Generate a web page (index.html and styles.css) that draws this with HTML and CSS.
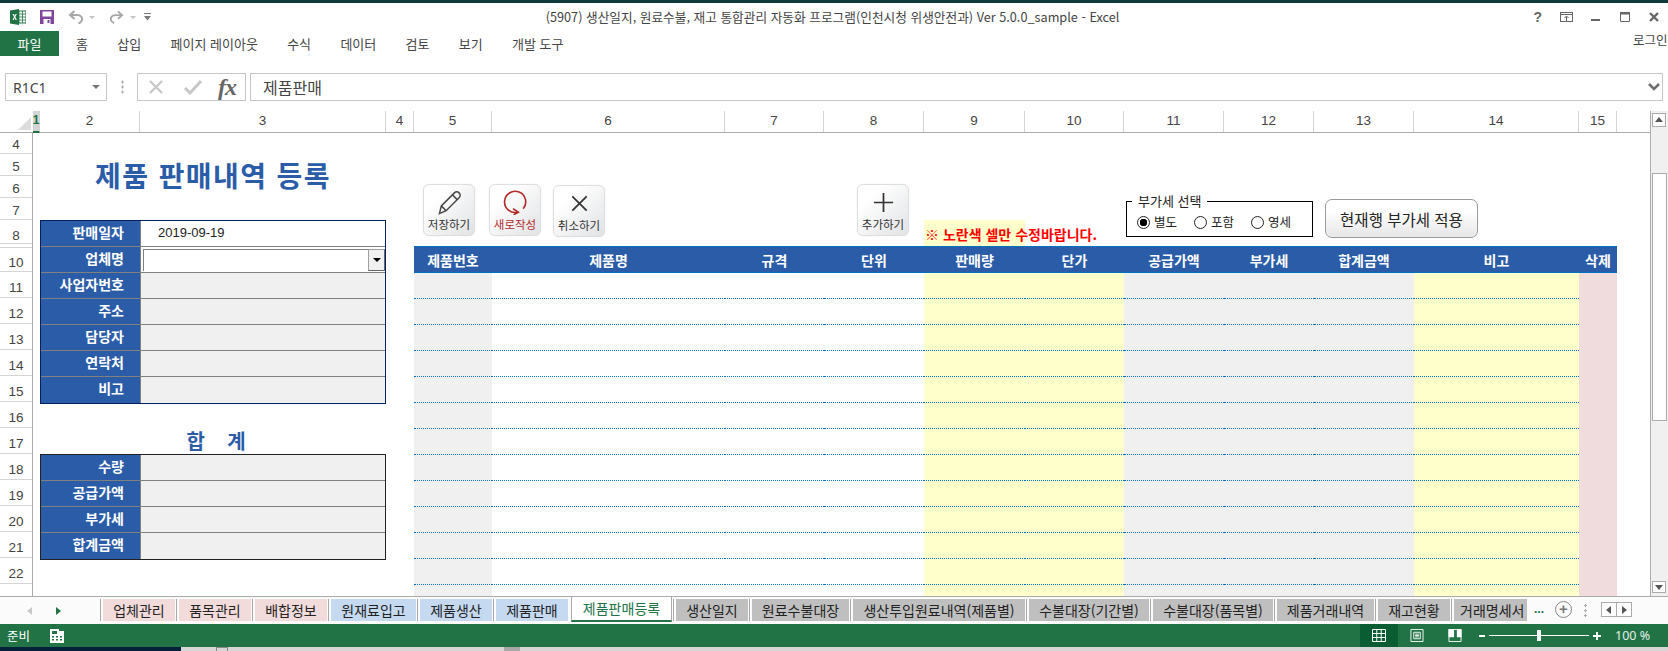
FILE: index.html
```html
<!DOCTYPE html>
<html lang="ko">
<head>
<meta charset="utf-8">
<title>제품 판매내역 등록</title>
<link rel="stylesheet" href="styles.css">
</head>
<body>
<div class="app">
  <header class="titlebar">
    <div class="qat">
      <svg class="q-xl" viewBox="0 0 16 16"><rect x="6" y="2" width="10" height="12" fill="#fff" stroke="#217346"/><path d="M9 2v12M12.500 2v12M6 5h10M6 8h10M6 11h10" stroke="#217346" stroke-width=".8"/><path d="M0 1.500 9 0v16L0 14.500z" fill="#217346"/><path d="m2.500 5 1.500 3-1.500 3h1.300l.9-2 .9 2h1.300l-1.600-3 1.500-3H5.500l-.8 1.900L3.900 5z" fill="#fff"/></svg>
      <svg class="q-save" viewBox="0 0 14 14"><path d="M0 0h14v14H0z" fill="#80469c"/><path d="M2.500 1.500h9v5h-9z" fill="#fff"/><path d="M3.500 9h7v5h-7z" fill="#fff"/><path d="M7.500 10h2v3h-2z" fill="#80469c"/></svg>
      <svg class="q-undo" viewBox="0 0 16 14"><path d="M6.500 1 2 5l4.500 4" fill="none" stroke="#a6a6a6" stroke-width="2"/><path d="M2.500 5H9c4 0 5.500 2.500 5 5-.4 2-2 3-3.500 3.500" fill="none" stroke="#a6a6a6" stroke-width="2"/></svg>
      <span class="q-caret"></span>
      <svg class="q-redo" viewBox="0 0 16 14"><path d="M9.500 1 14 5 9.500 9" fill="none" stroke="#a6a6a6" stroke-width="2"/><path d="M13.500 5H7C3 5 1.500 7.500 2 10c.4 2 2 3 3.500 3.500" fill="none" stroke="#a6a6a6" stroke-width="2"/></svg>
      <span class="q-caret q-caret2"></span>
      <svg class="q-cust" viewBox="0 0 7 8"><path d="M0 0h7v1H0zM0 3h7L3.500 7.500z" fill="#7a7a7a"/></svg>
    </div>
    <div class="doc-title">(5907) 생산일지, 원료수불, 재고 통합관리 자동화 프로그램(인천시청 위생안전과) Ver 5.0.0_sample - Excel</div>
    <div class="winctl">
      <span class="help">?</span>
      <svg class="w-disp" viewBox="0 0 13 10"><rect x=".5" y=".5" width="12" height="9" fill="none" stroke="#666"/><path d="M0 2.500h13M6.500 9V4.500M4.500 6l2-2 2 2" fill="none" stroke="#666"/></svg>
      <svg class="w-min" viewBox="0 0 9 10"><path d="M0 7h9v2H0z" fill="#666"/></svg>
      <svg class="w-max" viewBox="0 0 10 10"><path d="M.5.500h9v9h-9z" fill="none" stroke="#666"/><path d="M0 0h10v2.500H0z" fill="#666"/></svg>
      <svg class="w-close" viewBox="0 0 10 10"><path d="m1 1 8 8M9 1 1 9" stroke="#666" stroke-width="2.400"/></svg>
    </div>
  </header>

  <nav class="ribbon">
    <span class="file">파일</span>
    <ul class="rtabs">
      <li>홈</li><li>삽입</li><li>페이지 레이아웃</li><li>수식</li><li>데이터</li><li>검토</li><li>보기</li><li>개발 도구</li>
    </ul>
    <span class="login">로그인</span>
  </nav>

  <div class="fbar">
    <div class="namebox"><span>R1C1</span><i class="caret"></i></div>
    <div class="vdots"></div>
    <div class="fxbox">
      <svg class="fx-x" viewBox="0 0 16 16"><path d="m2 2 12 12M14 2 2 14" stroke="#c8c8c8" stroke-width="2.400"/></svg>
      <svg class="fx-c" viewBox="0 0 20 16"><path d="m2 9 5 5L18 2" fill="none" stroke="#c8c8c8" stroke-width="3"/></svg>
      <span class="fx">fx</span>
    </div>
    <div class="finput"><span>제품판매</span><svg viewBox="0 0 12 8"><path d="m1 1 5 5 5-5" fill="none" stroke="#6e6e6e" stroke-width="2.500"/></svg></div>
  </div>

  <main class="main">
    <div class="sheet">
      <div class="colhead">
        <div class="corner"><i></i></div>
        <span class="ch c1 sel">1</span><span class="ch c2">2</span><span class="ch c3">3</span><span class="ch c4">4</span><span class="ch c5">5</span><span class="ch c6">6</span><span class="ch c7">7</span><span class="ch c8">8</span><span class="ch c9">9</span><span class="ch c10">10</span><span class="ch c11">11</span><span class="ch c12">12</span><span class="ch c13">13</span><span class="ch c14">14</span><span class="ch c15">15</span>
      </div>
      <div class="body">
        <div class="rowhead">
          <span class="rh r21">4</span><span class="rh r22">5</span><span class="rh r22">6</span><span class="rh r22">7</span><span class="rh r8">8</span><span class="rh r4"></span><span class="rh r24">10</span><span class="rh">11</span><span class="rh">12</span><span class="rh">13</span><span class="rh">14</span><span class="rh">15</span><span class="rh">16</span><span class="rh">17</span><span class="rh">18</span><span class="rh">19</span><span class="rh">20</span><span class="rh">21</span><span class="rh">22</span>
        </div>
        <div class="canvas">
          <section class="left">
            <h1 class="bigtitle">제품 판매내역 등록</h1>
            <div class="form navy">
              <div class="lb">판매일자</div><div class="val white date">2019-09-19</div>
              <div class="lb">업체명</div><div class="val white combo"><span class="cbfield"></span><span class="cbbtn"></span></div>
              <div class="lb">사업자번호</div><div class="val"></div>
              <div class="lb">주소</div><div class="val"></div>
              <div class="lb">담당자</div><div class="val"></div>
              <div class="lb">연락처</div><div class="val"></div>
              <div class="lb">비고</div><div class="val"></div>
            </div>
            <h2 class="sumtitle">합&nbsp;&nbsp;&nbsp;&nbsp;계</h2>
            <div class="form dark">
              <div class="lb">수량</div><div class="val"></div>
              <div class="lb">공급가액</div><div class="val"></div>
              <div class="lb">부가세</div><div class="val"></div>
              <div class="lb">합계금액</div><div class="val"></div>
            </div>
          </section>
          <section class="right">
            <div class="righttop"><p class="note"><span>※ 노란색 셀만 수정바랍니다.</span></p></div>
            <table class="grid">
              <colgroup><col class="c5"><col class="c6"><col class="c7"><col class="c8"><col class="c9"><col class="c10"><col class="c11"><col class="c12"><col class="c13"><col class="c14"><col class="c15"></colgroup>
              <thead><tr><th>제품번호</th><th>제품명</th><th>규격</th><th>단위</th><th>판매량</th><th>단가</th><th>공급가액</th><th>부가세</th><th>합계금액</th><th>비고</th><th>삭제</th></tr></thead>
              <tbody>
                <tr><td class="g"></td><td></td><td></td><td></td><td class="y"></td><td class="y"></td><td class="g"></td><td class="g"></td><td class="g"></td><td class="y"></td><td class="p"></td></tr>
                <tr><td class="g"></td><td></td><td></td><td></td><td class="y"></td><td class="y"></td><td class="g"></td><td class="g"></td><td class="g"></td><td class="y"></td><td class="p"></td></tr>
                <tr><td class="g"></td><td></td><td></td><td></td><td class="y"></td><td class="y"></td><td class="g"></td><td class="g"></td><td class="g"></td><td class="y"></td><td class="p"></td></tr>
                <tr><td class="g"></td><td></td><td></td><td></td><td class="y"></td><td class="y"></td><td class="g"></td><td class="g"></td><td class="g"></td><td class="y"></td><td class="p"></td></tr>
                <tr><td class="g"></td><td></td><td></td><td></td><td class="y"></td><td class="y"></td><td class="g"></td><td class="g"></td><td class="g"></td><td class="y"></td><td class="p"></td></tr>
                <tr><td class="g"></td><td></td><td></td><td></td><td class="y"></td><td class="y"></td><td class="g"></td><td class="g"></td><td class="g"></td><td class="y"></td><td class="p"></td></tr>
                <tr><td class="g"></td><td></td><td></td><td></td><td class="y"></td><td class="y"></td><td class="g"></td><td class="g"></td><td class="g"></td><td class="y"></td><td class="p"></td></tr>
                <tr><td class="g"></td><td></td><td></td><td></td><td class="y"></td><td class="y"></td><td class="g"></td><td class="g"></td><td class="g"></td><td class="y"></td><td class="p"></td></tr>
                <tr><td class="g"></td><td></td><td></td><td></td><td class="y"></td><td class="y"></td><td class="g"></td><td class="g"></td><td class="g"></td><td class="y"></td><td class="p"></td></tr>
                <tr><td class="g"></td><td></td><td></td><td></td><td class="y"></td><td class="y"></td><td class="g"></td><td class="g"></td><td class="g"></td><td class="y"></td><td class="p"></td></tr>
                <tr><td class="g"></td><td></td><td></td><td></td><td class="y"></td><td class="y"></td><td class="g"></td><td class="g"></td><td class="g"></td><td class="y"></td><td class="p"></td></tr>
                <tr><td class="g"></td><td></td><td></td><td></td><td class="y"></td><td class="y"></td><td class="g"></td><td class="g"></td><td class="g"></td><td class="y"></td><td class="p"></td></tr>
                <tr class="tail"><td class="g"></td><td></td><td></td><td></td><td class="y"></td><td class="y"></td><td class="g"></td><td class="g"></td><td class="g"></td><td class="y"></td><td class="p"></td></tr>
              </tbody>
            </table>
          </section>

          <button class="sbtn b-save"><svg viewBox="0 0 26 26"><path d="M2.500 24.500 4.500 16.500 18 3c1.500-1.500 3.500-1.500 5 0s1.500 3.500 0 5L9.500 21.500zM4.500 16.500l5 5M16 5l5 5" fill="none" stroke="#444" stroke-width="1.500"/></svg><span>저장하기</span></button>
          <button class="sbtn b-new"><svg viewBox="0 0 26 26"><path d="M21 19.500A11 11 0 1 0 15.500 23" fill="none" stroke="#b22b2b" stroke-width="1.700"/><path d="m10.500 19.500 5.500 3.500-5 2.800" fill="none" stroke="#b22b2b" stroke-width="1.700"/></svg><span>새로작성</span></button>
          <button class="sbtn b-cancel"><svg viewBox="0 0 26 26"><path d="m5.500 5.500 15 15M20.500 5.500l-15 15" stroke="#333" stroke-width="1.800"/></svg><span>취소하기</span></button>
          <button class="sbtn b-add"><svg viewBox="0 0 26 26"><path d="M13 3v20M3 13h20" stroke="#333" stroke-width="1.800"/></svg><span>추가하기</span></button>

          <div class="vatbox">
            <span class="vatlegend">부가세 선택</span>
            <div class="radios">
              <span class="radio on"><i></i>별도</span>
              <span class="radio"><i></i>포함</span>
              <span class="radio"><i></i>영세</span>
            </div>
          </div>
          <button class="applybtn">현재행 부가세 적용</button>
        </div>
      </div>
    </div>
    <aside class="vscroll">
      <span class="sb-btn up"></span>
      <span class="sb-thumb"></span>
      <span class="sb-btn down"></span>
    </aside>
  </main>

  <div class="tabbar">
    <div class="tabnav"><i class="prev"></i><i class="next"></i></div>
    <span class="tab pink t72">업체관리</span>
    <span class="tab pink t72">품목관리</span>
    <span class="tab pink t72">배합정보</span>
    <span class="tab blue t85">원재료입고</span>
    <span class="tab blue t72">제품생산</span>
    <span class="tab blue t72">제품판매</span>
    <span class="tab active">제품판매등록</span>
    <span class="tab gray t72">생산일지</span>
    <span class="tab gray t97">원료수불대장</span>
    <span class="tab gray t172">생산투입원료내역(제품별)</span>
    <span class="tab gray t119">수불대장(기간별)</span>
    <span class="tab gray t120">수불대장(품목별)</span>
    <span class="tab gray t97">제품거래내역</span>
    <span class="tab gray t72">재고현황</span>
    <span class="tab gray t73 cut">거래명세서</span>
    <span class="more">...</span>
    <span class="addsheet">+</span>
    <span class="tdots"></span>
    <span class="hnav"><i class="hl"></i><i class="hr"></i></span>
  </div>

  <footer class="status">
    <span class="ready">준비</span>
    <svg class="macro" viewBox="0 0 14 14"><path d="M0 0h9v2h5v12H0z" fill="#fff"/><path d="M2 2h5v3H2zM2 7h2v1.500H2zM6 7h2v1.500H6zM10 7h2v1.500h-2zM2 10h2v1.500H2zM6 10h2v1.500H6zM10 10h2v1.500h-2z" fill="#217346"/></svg>
    <div class="views">
      <span class="view on"><svg viewBox="0 0 14 13"><path d="M.5.500h13v12H.5zM4.800.500v12M9.200.500v12M.5 4.500h13M.5 8.500h13" fill="none" stroke="#fff"/></svg></span>
      <span class="view"><svg viewBox="0 0 14 14"><path d="M.5.500h13v13H.5z" fill="none" stroke="#fff"/><path d="M3.500 3.500h7v7h-7zM5 5.500h4M5 7h4M5 8.500h4" fill="none" stroke="#fff"/></svg></span>
      <span class="view"><svg viewBox="0 0 14 14"><path d="M.5.500h13v13H.5z" fill="none" stroke="#fff"/><path d="M0 0h6v9H0zM9 0h5v9H9z" fill="#fff"/></svg></span>
    </div>
    <div class="zoom"><i class="zminus"></i><span class="zline"><i></i></span><span class="zplus"></span></div>
    <span class="pct">100 %</span>
  </footer>
  <div class="taskstrip"><span class="ts-dark"></span><span class="ts-box"></span><span class="ts-grey"></span></div>
</div>
</body>
</html>
```

FILE: styles.css
```css
* { box-sizing: border-box; }
html, body { margin: 0; padding: 0; background: #fff; }
body { font-family: "Noto Sans CJK KR", "Noto Sans", sans-serif; color: #444; overflow: hidden; }
.app { width: 1668px; height: 651px; display: flex; flex-direction: column; overflow: hidden; }
h1, h2, p { margin: 0; }
i { display: block; font-style: normal; }

/* title bar */
.titlebar { height: 31px; border-top: 3px solid #0e3a3a; display: grid; grid-template-columns: 1fr auto 1fr; align-items: center; position: relative; }
.qat { display: flex; align-items: center; padding-left: 10px; }
.qat svg { display: block; flex: none; }
.q-xl { width: 16px; height: 16px; }
.q-save { width: 14px; height: 14px; margin-left: 14px; }
.q-undo { width: 16px; height: 14px; margin-left: 14px; }
.q-redo { width: 15px; height: 14px; margin-left: 14px; }
.q-caret { width: 0; height: 0; border: 3px solid transparent; border-top: 3px solid #c4c4c4; border-bottom: 0; margin-left: 5px; }
.q-caret2 { margin-left: 6px; }
.q-cust { width: 7px; height: 8px; margin-left: 8px; }
.doc-title { font-size: 12.700px; color: #444; white-space: nowrap; line-height: 28px; margin-left: -3px; }
.winctl { display: flex; align-items: center; justify-content: flex-end; padding-right: 9px; }
.winctl svg { display: block; flex: none; }
.help { font: bold 14px "Liberation Sans", sans-serif; color: #666; margin-right: 18px; }
.w-disp { width: 13px; height: 10px; }
.w-min { width: 9px; height: 10px; margin-left: 18px; }
.w-max { width: 10px; height: 10px; margin-left: 20px; }
.w-close { width: 10px; height: 10px; margin-left: 19px; }

/* ribbon */
.ribbon { height: 42px; display: flex; align-items: flex-start; position: relative; font-size: 13px; }
.file { width: 59px; height: 25px; background: #217346; color: #fff; display: flex; align-items: center; justify-content: center; }
.rtabs { list-style: none; margin: 0 0 0 17px; padding: 0; display: flex; gap: 29.300px; height: 25px; align-items: center; color: #444; }
.login { margin-left: auto; margin-top: -1px; font-size: 12.500px; line-height: 20px; white-space: nowrap; width: 35px; }

/* formula bar */
.fbar { height: 28px; display: flex; align-items: stretch; padding: 0 5px; margin-bottom: 10px; }
.namebox { width: 102px; border: 1px solid #c6c6c6; display: flex; align-items: center; justify-content: space-between; padding: 0 6px 0 7px; font: 14px "Noto Sans", sans-serif; color: #444; }
.caret { width: 0; height: 0; border: 4px solid transparent; border-top: 4px solid #777; border-bottom: 0; }
.vdots { width: 30px; background: radial-gradient(circle, #a8a8a8 1px, transparent 1.200px) center / 3px 5px repeat-y; background-size: 3px 5px; margin: 7px 0; }
.fxbox { width: 109px; border: 1px solid #c6c6c6; display: flex; align-items: center; padding-left: 10px; }
.fx-x { width: 16px; height: 16px; }
.fx-c { width: 20px; height: 16px; margin-left: 19px; }
.fx { font: italic bold 24px "Liberation Serif", serif; color: #666; margin-left: 15px; line-height: 24px; letter-spacing: -1px; }
.finput { flex: 1; margin-left: 4px; border: 1px solid #c6c6c6; display: flex; align-items: center; justify-content: space-between; padding: 0 2px 0 12px; font-size: 16px; color: #444; }
.finput svg { width: 12px; height: 8px; }

/* sheet */
.main { flex: none; height: 485px; display: flex; }
.sheet { width: 1650px; display: flex; flex-direction: column; }
.colhead { height: 22px; display: flex; border-bottom: 1px solid #ababab; font: 13.500px "Liberation Sans", sans-serif; color: #444; flex: none; }
.corner { width: 33px; position: relative; flex: none; overflow: hidden; }
.corner i { position: absolute; right: 2px; bottom: 2px; width: 0; height: 0; border-style: solid; border-width: 0 0 13px 13px; border-color: transparent transparent #dcdcdc transparent; }
.ch { display: flex; align-items: center; justify-content: center; border-right: 1px solid #d4d4d4; flex: none; padding-bottom: 3px; }
.ch.sel { background: #d4d4d4; color: #217346; font-weight: bold; border-bottom: 2px solid #217346; margin-bottom: -1px; font-size: 12px; }
.c1 { width: 7px; } .c2 { width: 100px; } .c3 { width: 246px; } .c4 { width: 28px; } .c5 { width: 78px; } .c6 { width: 233px; } .c7 { width: 99px; } .c8 { width: 100px; } .c9 { width: 101px; } .c10 { width: 99px; } .c11 { width: 100px; } .c12 { width: 90px; } .c13 { width: 100px; } .c14 { width: 165px; } .c15 { width: 38px; }

.body { flex: 1; display: flex; min-height: 0; overflow: hidden; }
.rowhead { width: 33px; flex: none; border-right: 1px solid #ababab; font: 13.500px "Liberation Sans", sans-serif; color: #444; }
.rh { height: 26px; padding-top: 6px; display: flex; align-items: center; justify-content: center; border-bottom: 1px solid #d4d4d4; }
.r21 { height: 21px; padding-top: 2px; } .r22 { height: 22px; padding-top: 3px; } .r24 { height: 24px; padding-top: 5px; } .r8 { height: 24px; padding-top: 8px; } .r4 { height: 4px; padding-top: 0; }

.canvas { flex: 1; position: relative; display: flex; align-items: flex-start; overflow: hidden; }
.left { width: 353px; padding-left: 7px; flex: none; }
.bigtitle { height: 87px; padding-top: 22px; font-size: 28px; line-height: 40px; font-weight: bold; color: #2b5ca8; text-align: center; letter-spacing: 1.400px; white-space: nowrap; }
.form { display: grid; grid-template-columns: 100px 1fr; grid-auto-rows: 26px; border: 1px solid #002060; margin-left: 0; }
.form.dark { border-color: #222; }
.lb { background: #2b5ca8; color: #fff; font-size: 14px; font-weight: bold; text-align: right; padding-right: 16px; line-height: 23px; border-bottom: 1px solid #808080; border-right: 1px solid #808080; margin-left: 0; }
.val { background: #f0f0f0; border-bottom: 1px solid #808080; }
.form > :nth-last-child(-n+2) { border-bottom: 0; }
.val.white { background: #fff; }
.date { font: 13px/24px "Liberation Sans", sans-serif; color: #222; padding-left: 17px; }
.combo { display: flex; padding: 2px 0 1px 2px; }
.cbfield { flex: 1; border-top: 1px solid #808080; border-left: 1px solid #808080; }
.cbbtn { width: 17px; background: #f0f0f0; border: 1px solid #a0a0a0; border-right-color: #666; border-bottom-color: #666; position: relative; }
.cbbtn::after { content: ""; position: absolute; left: 4px; top: 8px; border: 4px solid transparent; border-top: 4px solid #000; border-bottom: 0; }
.sumtitle { height: 50px; padding: 23px 0 0 6px; font-size: 20px; line-height: 28px; font-weight: bold; color: #2b5ca8; text-align: center; white-space: nowrap; }

.right { margin-left: 28px; width: 1203px; flex: none; }
.righttop { height: 113px; display: flex; align-items: flex-end; padding-left: 510px; }
.note { width: 101px; height: 26px; background: #ffffcc; white-space: nowrap; color: #f00; font-size: 14px; font-weight: bold; line-height: 28px; padding-left: 1px; }
.grid { border-collapse: separate; border-spacing: 0; table-layout: fixed; width: 1203px; }
.grid th { height: 27px; padding: 0; background: #2b5ca8; border-top: 1px solid #0070c0; border-bottom: 1px solid #0070c0; color: #fff; font-size: 14px; font-weight: bold; line-height: 20px; }
.grid td { height: 26px; padding: 0; border-bottom: 1px dotted #0070c0; }
.grid td.g { background-color: #f0f0f0; }
.grid td.y { background-color: #ffffcc; }
.grid td.p { background-color: #f0dcdc; border-bottom: 0; }
.grid tr.tail td { border-bottom: 0; }

/* floating shapes */
.sbtn { position: absolute; top: 51px; width: 52px; height: 52px; padding: 5px 0 0; border: 1px solid #dedede; border-radius: 6px; background: linear-gradient(135deg, #fff 25%, #e0e2e4 100%); box-shadow: 0 0 1px #d0d0d0; display: flex; flex-direction: column; align-items: center; font-family: inherit; font-size: 11.500px; color: #333; }
.sbtn svg { width: 25px; height: 25px; display: block; flex: none; }
.sbtn span { line-height: 16px; margin-top: 1px; white-space: nowrap; }
.b-save { left: 390px; }
.b-new { left: 456px; color: #b22b2b; }
.b-cancel { left: 520px; top: 52px; }
.b-add { left: 824px; }
.vatbox { position: absolute; left: 1093px; top: 68px; width: 187px; height: 36px; border: 1px solid #000; }
.vatlegend { position: absolute; left: 5px; top: -9px; background: #fff; padding: 0 6px; font-size: 13px; line-height: 16px; color: #222; white-space: nowrap; }
.radios { display: flex; padding: 11px 0 0 10px; gap: 17px; }
.radio { display: flex; align-items: center; font-size: 12.500px; line-height: 18px; color: #222; gap: 4px; white-space: nowrap; }
.radio i { width: 13px; height: 13px; border: 1px solid #222; border-radius: 50%; background: #fff; }
.radio.on i { background: radial-gradient(circle, #000 3.500px, #fff 4px); }
.applybtn { position: absolute; left: 1292px; top: 66px; width: 153px; height: 39px; border: 1px solid #9a9a9a; border-radius: 7px; background: linear-gradient(#fff 30%, #e6e6e6 100%); font-family: inherit; font-size: 15.500px; color: #222; padding: 0; box-shadow: inset 0 0 2px #fff; white-space: nowrap; }

/* vertical scrollbar */
.vscroll { width: 18px; flex: none; background: #f0f0f0; border-left: 1px solid #ababab; position: relative; }
.sb-btn { position: absolute; left: 1px; width: 14px; height: 14px; background: #fff; border: 1px solid #ababab; }
.sb-btn.up { top: 2px; }
.sb-btn.up::after { content: ""; position: absolute; left: 2px; top: 3px; border: 4px solid transparent; border-bottom: 5px solid #555; border-top: 0; }
.sb-btn.down { bottom: 3px; height: 12px; }
.sb-btn.down::after { content: ""; position: absolute; left: 2px; top: 3px; border: 4px solid transparent; border-top: 5px solid #555; border-bottom: 0; }
.sb-thumb { position: absolute; left: 1px; top: 62px; width: 15px; height: 248px; background: #fff; border: 1px solid #ababab; }

/* sheet tabs */
.tabbar { height: 28px; flex: none; display: flex; align-items: stretch; border-top: 1px solid #ababab; background: #fbfbfb; font-size: 14px; color: #222; padding-top: 2px; }
.tabnav { width: 103px; display: flex; align-items: center; padding-left: 27px; gap: 24px; position: relative; padding-bottom: 1px; }
.tabnav i { width: 0; height: 0; border: 4px solid transparent; border-left: 0; }
.tabnav .prev { border-right: 5px solid #c8c8c8; }
.tabnav .next { border-left: 5px solid #217346; border-right: 0; }
.tab { height: 22px; display: flex; align-items: center; justify-content: center; margin-right: 4px; white-space: nowrap; flex: none; line-height: 20px; position: relative; }
.tab::before { content: ""; position: absolute; left: -3px; top: 0; bottom: 0; width: 1px; background: #a8a8a8; }
.tab.active::before { display: none; }
.tab.pink { background: #f2dcdb; }
.tab.blue { background: #c5d9f1; }
.tab.gray { background: #bfbfbf; }
.tab.active { width: 101px; height: 25px; margin: -2px 4px 0 -1px; padding-bottom: 1px; background: #fff; color: #217346; border-bottom: 2px solid #217346; border-left: 1px solid #ababab; border-right: 1px solid #ababab; }
.t72 { width: 72px; } .t73 { width: 73px; } .t85 { width: 85px; } .t97 { width: 97px; } .t119 { width: 120px; } .t120 { width: 120px; } .t172 { width: 172px; }
.tab.cut { justify-content: flex-start; padding-left: 6px; margin-right: 7px; }
.more { font-weight: bold; color: #217346; line-height: 20px; font-size: 12px; width: 21px; font-family: "Liberation Sans", sans-serif; }
.addsheet { width: 17px; height: 17px; border: 1px solid #888; border-radius: 50%; font: bold 15px/14px "Liberation Sans", sans-serif; color: #777; text-align: center; margin-top: 2px; }
.tdots { width: 3px; margin: 4px 0 6px 12px; background: radial-gradient(circle, #aaa 1px, transparent 1.200px) center / 3px 5px repeat-y; }
.hnav { display: flex; width: 31px; height: 15px; margin: 3px 0 0 14px; border: 1px solid #ababab; background: #fff; }
.hnav i { flex: 1; position: relative; }
.hl { border-right: 1px solid #ababab; }
.hl::after { content: ""; position: absolute; left: 4px; top: 3px; border: 4px solid transparent; border-left: 0; border-right: 5px solid #555; }
.hr::after { content: ""; position: absolute; left: 5px; top: 3px; border: 4px solid transparent; border-right: 0; border-left: 5px solid #555; }

/* status */
.status { height: 23px; flex: none; background: #217346; color: #fff; display: flex; align-items: center; font-size: 12.500px; }
.ready { margin-left: 7px; width: 43px; }
.macro { width: 14px; height: 14px; }
.views { margin-left: auto; display: flex; align-items: stretch; height: 23px; width: 120px; }
.view { width: 38px; display: flex; align-items: center; justify-content: center; }
.view.on { background: #0a5d32; }
.view svg { width: 14px; height: 13px; display: block; }
.zoom { display: flex; align-items: center; width: 136px; padding-left: 0; margin-left: -1px; }
.zminus { width: 6px; height: 2px; background: #fff; }
.zline { width: 100px; height: 1px; background: #fff; margin-left: 4px; position: relative; }
.zline i { position: absolute; left: 48px; top: -5px; width: 4px; height: 11px; background: #fff; }
.zplus { margin-left: 4px; width: 8px; height: 8px; background: linear-gradient(#fff, #fff) center / 8px 2px no-repeat, linear-gradient(#fff, #fff) center / 2px 8px no-repeat; }
.pct { font: 12.500px "Noto Sans", sans-serif; color: #e4eee8; width: 35px; margin-right: 18px; white-space: nowrap; }

.taskstrip { flex: 1; display: flex; background: #d6d6d6; }
.ts-dark { width: 181px; background: #04203a; }
.ts-box { width: 12px; margin-left: 35px; border: 1px solid #888; border-bottom: 0; }
.ts-grey { width: 16px; margin-left: 276px; background: #a8a8a8; }
```
